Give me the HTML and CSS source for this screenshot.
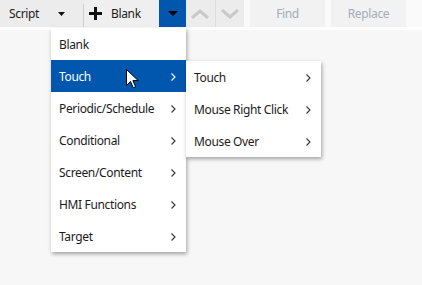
FILE: index.html
```html
<!DOCTYPE html>
<html>
<head>
<meta charset="utf-8">
<link rel="stylesheet" href="styles.css">
</head>
<body>
<div class="toolbar">
  <div class="group">
    <div class="btn script">
      <span class="label">Script</span>
      <svg class="caret" width="7" height="4" viewBox="0 0 7 4"><path d="M0 0H7L3.5 4Z" fill="#111"/></svg>
    </div>
    <div class="sep"></div>
    <div class="btn blank">
      <svg class="plus" width="13" height="13" viewBox="0 0 13 13"><path d="M6.5 0V13M0 6.5H13" stroke="#111" stroke-width="3"/></svg>
      <span class="label">Blank</span>
    </div>
    <div class="btn drop">
      <svg width="10" height="5" viewBox="0 0 10 5"><path d="M0 0H10L5 5Z" fill="#000"/></svg>
    </div>
    <div class="btn nav">
      <svg width="20" height="10" viewBox="0 0 20 10"><path d="M2 9L10 2L18 9" fill="none" stroke="#c9c9c9" stroke-width="3"/></svg>
    </div>
    <div class="sep light"></div>
    <div class="btn nav">
      <svg width="20" height="10" viewBox="0 0 20 10"><path d="M2 1L10 8L18 1" fill="none" stroke="#c9c9c9" stroke-width="3"/></svg>
    </div>
  </div>
  <div class="btn action">Find</div>
  <div class="btn action">Replace</div>
</div>

<div class="menu main">
  <div class="item">Blank</div>
  <div class="item sub active">Touch<svg class="chev" width="5" height="8" viewBox="0 0 5 8"><path d="M0.5 0.5L4 4L0.5 7.5" fill="none" stroke="currentColor" stroke-width="1.1"/></svg></div>
  <div class="item sub">Periodic/Schedule<svg class="chev" width="5" height="8" viewBox="0 0 5 8"><path d="M0.5 0.5L4 4L0.5 7.5" fill="none" stroke="currentColor" stroke-width="1.1"/></svg></div>
  <div class="item sub">Conditional<svg class="chev" width="5" height="8" viewBox="0 0 5 8"><path d="M0.5 0.5L4 4L0.5 7.5" fill="none" stroke="currentColor" stroke-width="1.1"/></svg></div>
  <div class="item sub">Screen/Content<svg class="chev" width="5" height="8" viewBox="0 0 5 8"><path d="M0.5 0.5L4 4L0.5 7.5" fill="none" stroke="currentColor" stroke-width="1.1"/></svg></div>
  <div class="item sub">HMI Functions<svg class="chev" width="5" height="8" viewBox="0 0 5 8"><path d="M0.5 0.5L4 4L0.5 7.5" fill="none" stroke="currentColor" stroke-width="1.1"/></svg></div>
  <div class="item sub">Target<svg class="chev" width="5" height="8" viewBox="0 0 5 8"><path d="M0.5 0.5L4 4L0.5 7.5" fill="none" stroke="currentColor" stroke-width="1.1"/></svg></div>
</div>

<div class="menu submenu">
  <div class="item sub">Touch<svg class="chev" width="5" height="8" viewBox="0 0 5 8"><path d="M0.5 0.5L4 4L0.5 7.5" fill="none" stroke="currentColor" stroke-width="1.1"/></svg></div>
  <div class="item sub">Mouse Right Click<svg class="chev" width="5" height="8" viewBox="0 0 5 8"><path d="M0.5 0.5L4 4L0.5 7.5" fill="none" stroke="currentColor" stroke-width="1.1"/></svg></div>
  <div class="item sub">Mouse Over<svg class="chev" width="5" height="8" viewBox="0 0 5 8"><path d="M0.5 0.5L4 4L0.5 7.5" fill="none" stroke="currentColor" stroke-width="1.1"/></svg></div>
</div>

<svg class="cursor" width="13" height="20" viewBox="0 0 13 20"><path d="M0.5 0.5V16.5L4.5 12.5L7.3 18.8L9.6 17.8L6.9 11.6H12.2Z" fill="#fff" stroke="#000" stroke-width="1" stroke-linejoin="miter"/></svg>
</body>
</html>
```
FILE: styles.css
```css
html, body {
  margin: 0;
  padding: 0;
}
body {
  background: #f7f7f7;
  font-family: "Noto Sans", "Open Sans", sans-serif;
  font-size: 12px;
  letter-spacing: -0.35px;
  color: #1b1b1b;
  width: 422px;
  height: 285px;
  overflow: hidden;
  position: relative;
}
.toolbar {
  display: flex;
  align-items: stretch;
  height: 27px;
  background: #fafafa;
  border-bottom: 3px solid #ffffff;
}
.group {
  display: flex;
  align-items: stretch;
  background: #ececec;
  width: 244px;
}
.btn {
  display: flex;
  align-items: center;
  box-sizing: border-box;
}
.script {
  width: 83px;
  padding-left: 9px;
}
.script .label {
  flex: 1;
}
.script .caret {
  margin-right: 18px;
  margin-top: 1px;
}
.sep {
  width: 1px;
  background: #cfcfcf;
  margin: 4px 0 0;
}
.sep.light {
  background: #dddddd;
  margin: 0;
}
.blank {
  width: 75px;
  padding-left: 5px;
  background: #efefef;
}
.blank .plus {
  margin-right: 9px;
}
.drop {
  width: 27px;
  background: #0057ad;
  justify-content: center;
}
.nav {
  flex: 1;
  justify-content: center;
}
.action {
  width: 75px;
  margin-left: 6px;
  justify-content: center;
  background: #f2f2f2;
  color: #a3abb9;
}
.menu {
  position: absolute;
  background: #ffffff;
  width: 135px;
  box-shadow: 1px 2px 4px rgba(0, 0, 0, 0.35);
}
.main {
  left: 51px;
  top: 28px;
}
.submenu {
  left: 186px;
  top: 61px;
}
.item {
  height: 32px;
  box-sizing: border-box;
  padding: 1px 10px 0 8px;
  display: flex;
  align-items: center;
  justify-content: space-between;
  color: #1b1b1b;
}
.item .chev {
  color: #333;
}
.item.active {
  background: #0057ad;
  color: #ffffff;
}
.item.active .chev {
  color: #ffffff;
}
.cursor {
  position: absolute;
  left: 126px;
  top: 69px;
}
```
